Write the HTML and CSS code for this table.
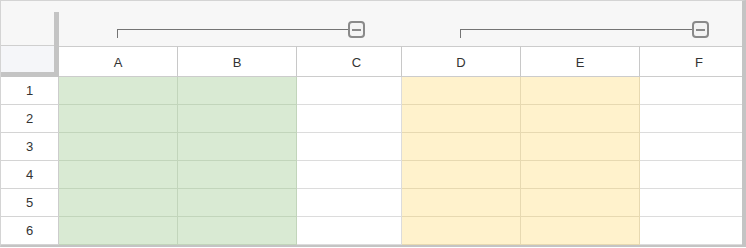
FILE: index.html
```html
<!DOCTYPE html>
<html lang="en">
<head>
    <meta charset="UTF-8">
    <meta name="viewport" content="width=device-width, initial-scale=1.0">
    <title>Column groups</title>
    <link rel="stylesheet" href="styles.css">
</head>
<body>

    <div class="sheet">
        <div class="grid">
            <!-- corner with the level bar -->
            <div class="corner">
                <div class="corner_bar">
                    <div class="corner_top"></div>
                    <div class="corner_bottom"></div>
                </div>
            </div>

            <!-- group brackets -->
            <div class="group group_1">
                <div class="bracket"></div>
                <span class="toggle"></span>
            </div>
            <div class="group group_2">
                <div class="bracket"></div>
                <span class="toggle"></span>
            </div>

            <!-- column headers -->
            <div class="col_head">A</div>
            <div class="col_head">B</div>
            <div class="col_head col_c">C</div>
            <div class="col_head">D</div>
            <div class="col_head">E</div>
            <div class="col_head">F</div>

            <div class="row_head">1</div>
            <div class="cell green"></div><div class="cell green"></div><div class="cell"></div>
            <div class="cell yellow"></div><div class="cell yellow"></div><div class="cell"></div>

            <div class="row_head">2</div>
            <div class="cell green"></div><div class="cell green"></div><div class="cell"></div>
            <div class="cell yellow"></div><div class="cell yellow"></div><div class="cell"></div>

            <div class="row_head">3</div>
            <div class="cell green"></div><div class="cell green"></div><div class="cell"></div>
            <div class="cell yellow"></div><div class="cell yellow"></div><div class="cell"></div>

            <div class="row_head">4</div>
            <div class="cell green"></div><div class="cell green"></div><div class="cell"></div>
            <div class="cell yellow"></div><div class="cell yellow"></div><div class="cell"></div>

            <div class="row_head">5</div>
            <div class="cell green"></div><div class="cell green"></div><div class="cell"></div>
            <div class="cell yellow"></div><div class="cell yellow"></div><div class="cell"></div>

            <div class="row_head">6</div>
            <div class="cell green"></div><div class="cell green"></div><div class="cell"></div>
            <div class="cell yellow"></div><div class="cell yellow"></div><div class="cell"></div>
        </div>
    </div>

</body>
</html>
```

FILE: styles.css
```css
* {
    box-sizing: border-box;
}
body {
    margin: 0;
    background: #fff;
    font-family: "Liberation Sans", Arial, sans-serif;
    font-size: 13px;
    color: #333;
}
.sheet {
    width: 746px;
    height: 247px;
    overflow: hidden;
    border-top: 1px solid #d4d4d4;
    border-left: 1px solid #d4d4d4;
    border-right: 4px solid #c4c4c4;
    border-bottom: 2px solid #c4c4c4;
}
.grid {
    display: grid;
    grid-template-columns: 58px 119px 119px 105px 119px 119px 119px;
    grid-template-rows: 45px 31px repeat(6, 28px);
    width: 758px;
}

/* corner */
.corner {
    grid-column: 1;
    grid-row: 1 / 3;
    background: #f7f7f7;
    padding-top: 11px;
    display: flex;
}
.corner_bar {
    flex: 1;
    display: flex;
    flex-direction: column;
    border-right: 5px solid #c4c4c4;
    border-bottom: 5px solid #c4c4c4;
}
.corner_top {
    height: 34px;
    border-bottom: 1px solid #cfcfcf;
}
.corner_bottom {
    flex: 1;
    background: #f5f6f9;
}

/* groups */
.group {
    grid-row: 1;
    background: #f7f7f7;
    display: flex;
    align-items: flex-start;
    padding-top: 20px;
}
.group_1 {
    grid-column: 2 / 5;
    padding-left: 58px;
    padding-right: 37px;
}
.group_2 {
    grid-column: 5 / 8;
    padding-left: 58px;
    padding-right: 50px;
}
.bracket {
    flex: 1;
    height: 9px;
    margin-top: 8px;
    border-top: 1px solid #747474;
    border-left: 1px solid #747474;
}
.toggle {
    position: relative;
    width: 17px;
    height: 17px;
    border: 2px solid #8a8a8a;
    border-radius: 4px;
    background: #f4f4f4;
}
.toggle::after {
    content: "";
    position: absolute;
    left: 2px;
    right: 2px;
    top: 6px;
    height: 2px;
    background: #8a8a8a;
}

/* headers */
.col_head {
    grid-row: 2;
    background: #fff;
    border-top: 1px solid #cccccc;
    border-bottom: 1px solid #cccccc;
    border-right: 1px solid #c8c8c8;
    display: flex;
    align-items: center;
    justify-content: center;
    padding-top: 1px;
}
.col_c {
    padding-left: 15px;
}
.row_head {
    grid-column: 1;
    background: #fff;
    border-right: 1px solid #cccccc;
    border-bottom: 1px solid #d4d4d4;
    display: flex;
    align-items: center;
    justify-content: center;
}

/* cells */
.cell {
    background: #fff;
    border-right: 1px solid #dcdcdc;
    border-bottom: 1px solid #dcdcdc;
}
.green {
    background: #d9ead3;
    border-color: #c2d5bb;
}
.yellow {
    background: #fff2cc;
    border-color: #e7d9b1;
}
```
